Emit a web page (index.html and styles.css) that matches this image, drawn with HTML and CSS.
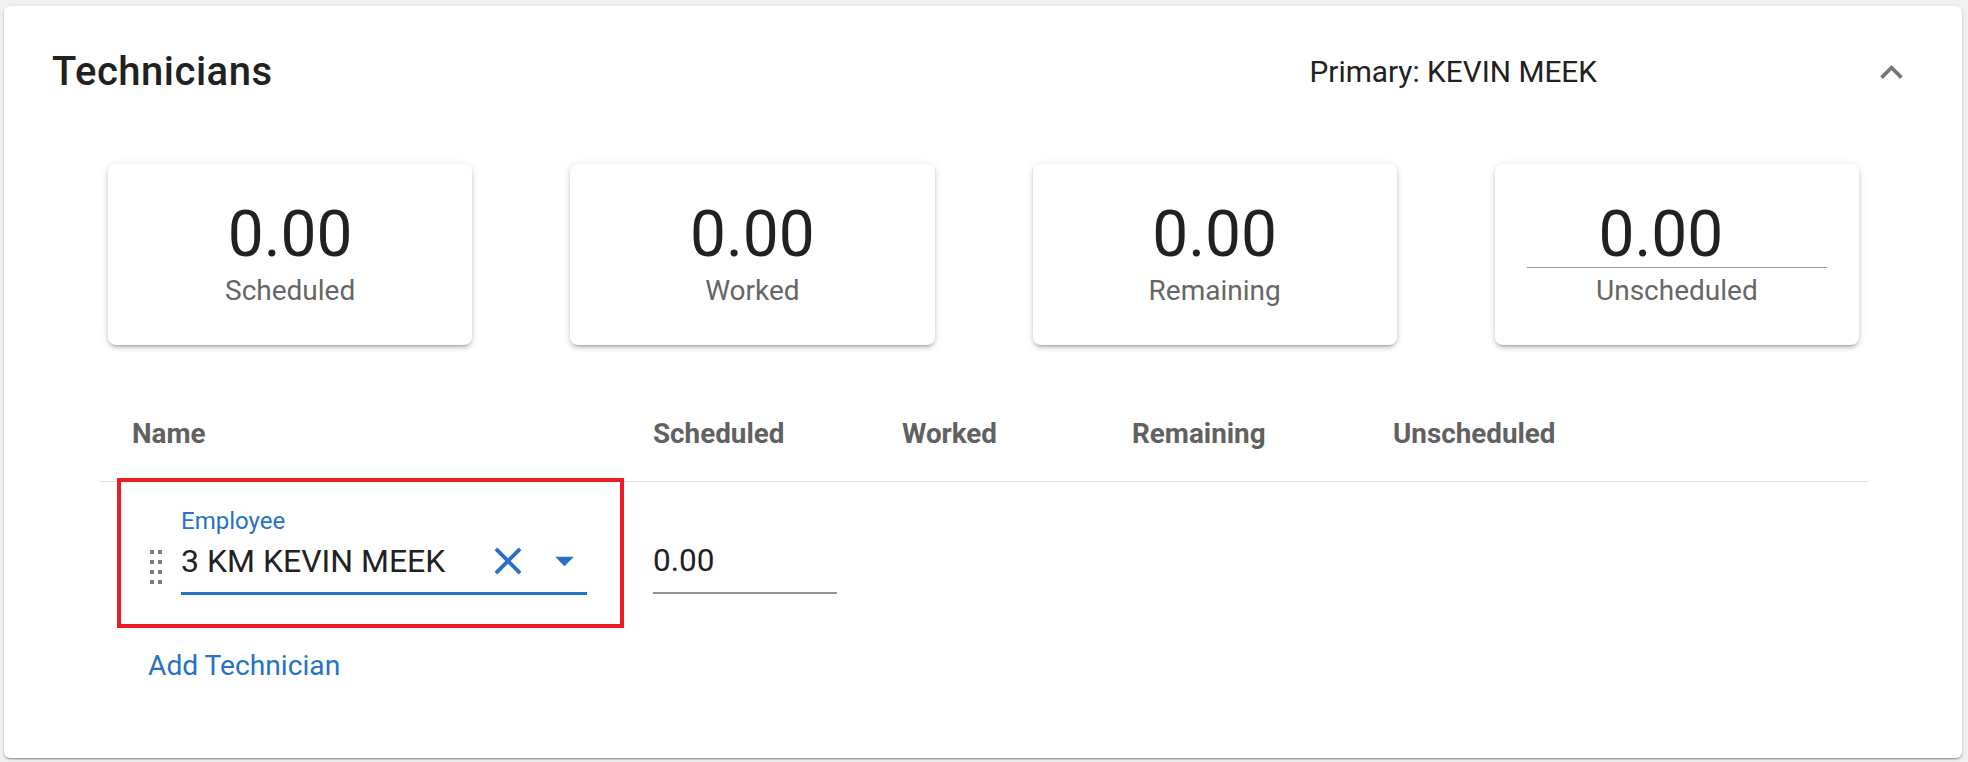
FILE: index.html
```html
<!DOCTYPE html>
<html lang="en">
<head>
<meta charset="utf-8">
<title>Technicians</title>
<link rel="stylesheet" href="styles.css">
</head>
<body>
<div class="page">
  <section class="panel">
    <header class="panel-head">
      <h1 class="title">Technicians</h1>
      <div class="primary">Primary: KEVIN MEEK</div>
      <span class="chev">
        <svg viewBox="0 0 24 24" width="45" height="45"><path d="M7.41 15.41L12 10.83l4.59 4.58L18 14l-6-6-6 6z"/></svg>
      </span>
    </header>

    <div class="stats">
      <div class="stat">
        <div class="stat-value">0.00</div>
        <div class="stat-label">Scheduled</div>
      </div>
      <div class="stat">
        <div class="stat-value">0.00</div>
        <div class="stat-label">Worked</div>
      </div>
      <div class="stat">
        <div class="stat-value">0.00</div>
        <div class="stat-label">Remaining</div>
      </div>
      <div class="stat">
        <div class="stat-value stat-input">0.00</div>
        <div class="stat-label">Unscheduled</div>
      </div>
    </div>

    <div class="table">
      <div class="thead">
        <div class="th th-name">Name</div>
        <div class="th">Scheduled</div>
        <div class="th">Worked</div>
        <div class="th">Remaining</div>
        <div class="th">Unscheduled</div>
      </div>
      <div class="trow">
        <div class="cell cell-name">
          <span class="handle">
            <svg viewBox="0 0 12 34" width="12" height="34">
              <rect x="0" y="0" width="4" height="4"/><rect x="8" y="0" width="4" height="4"/>
              <rect x="0" y="10" width="4" height="4"/><rect x="8" y="10" width="4" height="4"/>
              <rect x="0" y="20" width="4" height="4"/><rect x="8" y="20" width="4" height="4"/>
              <rect x="0" y="30" width="4" height="4"/><rect x="8" y="30" width="4" height="4"/>
            </svg>
          </span>
          <div class="field">
            <div class="field-label">Employee</div>
            <div class="field-line">
              <span class="field-text">3 KM KEVIN MEEK</span>
              <span class="icon icon-clear">
                <svg viewBox="0 0 24 24" width="46" height="46"><path d="M19 6.41L17.59 5 12 10.59 6.41 5 5 6.41 10.59 12 5 17.59 6.41 19 12 13.41 17.59 19 19 17.59 13.41 12z"/></svg>
              </span>
              <span class="icon icon-drop">
                <svg viewBox="0 0 24 24" width="45" height="45"><path d="M7 10l5 5 5-5z"/></svg>
              </span>
            </div>
          </div>
        </div>
        <div class="cell cell-num">
          <div class="num-field">0.00</div>
        </div>
        <div class="highlight"></div>
      </div>
      <div class="add">Add Technician</div>
    </div>
  </section>
</div>
</body>
</html>
```

FILE: styles.css
```css
* { box-sizing: border-box; }

html, body {
  margin: 0;
  padding: 0;
  background: #eef0f2;
  font-family: Roboto, "Liberation Sans", Arial, sans-serif;
  color: #212121;
}

.page {
  padding: 6px 6px 4px 4px;
}

.panel {
  background: #ffffff;
  border-radius: 6px;
  box-shadow: 0 2px 2px -1px rgba(0,0,0,0.25), 0 1px 2px rgba(0,0,0,0.14), 0 1px 4px rgba(0,0,0,0.10);
  padding-bottom: 74px;
}

/* header */
.panel-head {
  display: flex;
  align-items: center;
  height: 132px;
  padding: 0 48px 0 48px;
}

.title {
  flex: 1;
  margin: 0;
  font-size: 40px;
  font-weight: 500;
  line-height: 1;
  color: #212121;
  letter-spacing: 0.5px;
}

.primary {
  width: 559.5px;
  font-size: 29.8px;
  line-height: 1;
  color: #212121;
}

.chev {
  width: 45px;
  height: 45px;
  display: flex;
}
.chev svg { fill: #757575; }

/* stat cards */
.stats {
  display: flex;
  gap: 98px;
  margin: 26px 103px 0 104px;
}

.stat {
  flex: 1;
  height: 181px;
  background: #fff;
  border-radius: 8px;
  box-shadow: 0 4px 2px -3px rgba(0,0,0,0.22), 0 3px 4px rgba(0,0,0,0.14), 0 1px 8px rgba(0,0,0,0.12);
  padding-top: 41px;
  display: flex;
  flex-direction: column;
  align-items: center;
}

.stat-value {
  width: 300px;
  font-size: 64px;
  line-height: 60px;
  height: 63px;
  padding-bottom: 2px;
  border-bottom: 1px solid transparent;
  text-align: center;
  color: #212121;
}

.stat-input {
  border-bottom-color: #949494;
  padding-right: 32px;
}

.stat-label {
  margin-top: 6.5px;
  font-size: 28px;
  line-height: 32px;
  color: #666666;
}

/* table */
.table {
  margin: 40px 94px 0 96px;
}

.thead {
  display: grid;
  grid-template-columns: 521px 249px 230px 261px 1fr;
  align-items: center;
  height: 97px;
  border-bottom: 1px solid #e0e0e0;
}

.th {
  padding-left: 32px;
  font-size: 27.8px;
  font-weight: 700;
  color: #616161;
}

.trow {
  position: relative;
  display: grid;
  grid-template-columns: 521px 249px 1fr;
  padding: 27px 0 33px;
}

.cell-name {
  display: flex;
  align-items: flex-start;
  padding-left: 50px;
}

.handle {
  display: flex;
  margin-top: 41px;
  margin-right: 19px;
}
.handle svg { fill: #7d7787; }

.field {
  width: 406px;
  border-bottom: 3px solid #2672c5;
  padding-bottom: 13px;
}

.field-label {
  font-size: 24px;
  line-height: 24px;
  color: #2672c5;
}

.field-line {
  display: flex;
  align-items: center;
  height: 36px;
  margin-top: 9.5px;
}

.field-text {
  flex: 1;
  font-size: 32px;
  line-height: 36px;
  color: #212121;
}

.icon {
  flex-shrink: 0;
  width: 45px;
  height: 36px;
  display: flex;
  align-items: center;
  justify-content: center;
}
.icon svg { flex-shrink: 0; fill: #2672c5; }

.icon-clear { margin-right: 11.5px; }

.cell-num {
  padding-left: 32px;
}

.num-field {
  width: 184px;
  margin-top: 33.5px;
  font-size: 31.5px;
  line-height: 36px;
  padding-bottom: 13px;
  border-bottom: 2px solid #949494;
  color: #212121;
}

.highlight {
  position: absolute;
  left: 17px;
  top: -4px;
  width: 507px;
  height: 150px;
  border: 4px solid #ec1c24;
  pointer-events: none;
}

.add {
  margin-top: 20.4px;
  padding-left: 48px;
  font-size: 28.2px;
  line-height: 36px;
  color: #2672c5;
}
```
